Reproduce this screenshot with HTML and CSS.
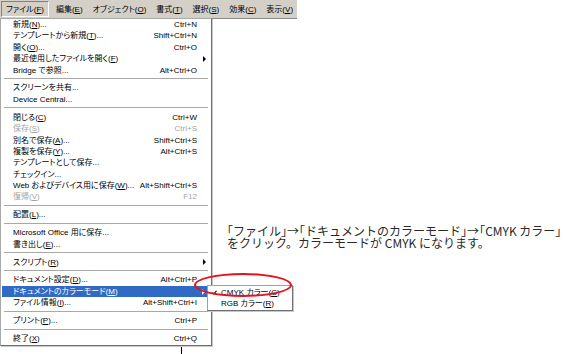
FILE: index.html
```html
<!DOCTYPE html>
<html lang="ja">
<head>
    <meta charset="UTF-8">
    <meta name="viewport" content="width=device-width, initial-scale=1.0">
    <title>ドキュメントのカラーモード</title>
    <link rel="stylesheet" href="styles.css">
</head>
<body>
    <div class="screen">
        <div class="menubar">
            <span class="bar-item active">ファイル(<u>F</u>)</span>
            <span class="bar-item">編集(<u>E</u>)</span>
            <span class="bar-item">オブジェクト(<u>O</u>)</span>
            <span class="bar-item">書式(<u>T</u>)</span>
            <span class="bar-item">選択(<u>S</u>)</span>
            <span class="bar-item">効果(<u>C</u>)</span>
            <span class="bar-item">表示(<u>V</u>)</span>
        </div>

        <div class="main">
            <div class="dropdown">
                <div class="row"><span>新規(<u>N</u>)...</span><span class="key">Ctrl+N</span><span></span></div>
                <div class="row"><span>テンプレートから新規(<u>T</u>)...</span><span class="key">Shift+Ctrl+N</span><span></span></div>
                <div class="row"><span>開く(<u>O</u>)...</span><span class="key">Ctrl+O</span><span></span></div>
                <div class="row"><span>最近使用したファイルを開く(<u>F</u>)</span><span class="key"></span><span class="arrow"></span></div>
                <div class="row"><span>Bridge で参照...</span><span class="key">Alt+Ctrl+O</span><span></span></div>
                <div class="sep"></div>
                <div class="row"><span>スクリーンを共有...</span><span class="key"></span><span></span></div>
                <div class="row"><span>Device Central...</span><span class="key"></span><span></span></div>
                <div class="sep"></div>
                <div class="row"><span>閉じる(<u>C</u>)</span><span class="key">Ctrl+W</span><span></span></div>
                <div class="row disabled"><span>保存(<u>S</u>)</span><span class="key">Ctrl+S</span><span></span></div>
                <div class="row"><span>別名で保存(<u>A</u>)...</span><span class="key">Shift+Ctrl+S</span><span></span></div>
                <div class="row"><span>複製を保存(<u>Y</u>)...</span><span class="key">Alt+Ctrl+S</span><span></span></div>
                <div class="row"><span>テンプレートとして保存...</span><span class="key"></span><span></span></div>
                <div class="row"><span>チェックイン...</span><span class="key"></span><span></span></div>
                <div class="row"><span>Web およびデバイス用に保存(<u>W</u>)...</span><span class="key">Alt+Shift+Ctrl+S</span><span></span></div>
                <div class="row disabled"><span>復帰(<u>V</u>)</span><span class="key">F12</span><span></span></div>
                <div class="sep"></div>
                <div class="row"><span>配置(<u>L</u>)...</span><span class="key"></span><span></span></div>
                <div class="sep"></div>
                <div class="row"><span>Microsoft Office 用に保存...</span><span class="key"></span><span></span></div>
                <div class="row"><span>書き出し(<u>E</u>)...</span><span class="key"></span><span></span></div>
                <div class="sep"></div>
                <div class="row"><span>スクリプト(<u>R</u>)</span><span class="key"></span><span class="arrow"></span></div>
                <div class="sep"></div>
                <div class="row"><span>ドキュメント設定(<u>D</u>)...</span><span class="key">Alt+Ctrl+P</span><span></span></div>
                <div class="row selected"><span>ドキュメントのカラーモード(<u>M</u>)</span><span class="key"></span><span class="arrow"></span></div>
                <div class="row"><span>ファイル情報(<u>I</u>)...</span><span class="key">Alt+Shift+Ctrl+I</span><span></span></div>
                <div class="sep"></div>
                <div class="row"><span>プリント(<u>P</u>)...</span><span class="key">Ctrl+P</span><span></span></div>
                <div class="sep"></div>
                <div class="row"><span>終了(<u>X</u>)</span><span class="key">Ctrl+Q</span><span></span></div>
            </div>

            <p class="note">
                <span class="hw">「</span>ファイル<span class="hw">」</span>→<span class="hw">「</span>ドキュメントのカラーモード<span class="hw">」</span>→<span class="hw">「</span>CMYK カラー<span class="hw">」</span><br>
                をクリック。カラーモードが CMYK になります。
            </p>
        </div>

        <!-- submenu, red mark and cursor sit over the menu -->
        <div class="submenu">
            <div class="sub-row">
                <svg class="check" width="5" height="5" viewBox="0 0 5 5"><polyline points="0.5,2.5 1.8,4 4.5,0.8" fill="none" stroke="#000" stroke-width="1.1"/></svg>
                <span>CMYK カラー(<u>C</u>)</span>
            </div>
            <div class="sub-row">
                <span></span>
                <span>RGB カラー(<u>R</u>)</span>
            </div>
        </div>
        <div class="ring"></div>
        <div class="cursor-line"></div>
    </div>
</body>
</html>
```

FILE: styles.css
```css
body {
    margin: 0;
    padding: 0;
    background: #fff;
    overflow: hidden;
}

.screen {
    position: relative;
    width: 563px;
    height: 354px;
    font-family: 'Liberation Sans', 'Noto Sans CJK JP', sans-serif;
    font-size: 8px;
    font-feature-settings: "palt";
    color: #000;
}

u {
    text-decoration: underline;
    text-underline-offset: 1px;
}

.menubar {
    display: flex;
    align-items: center;
    width: 297px;
    height: 18px;
    background: #d4d0c8;
    border-bottom: 1px solid #8c8c8c;
    overflow: hidden;
    white-space: nowrap;
}

.bar-item {
    padding: 2px 4px 1px;
    line-height: 11px;
    border: 1px solid transparent;
}

.bar-item.active {
    margin-left: 1px;
    margin-right: 2px;
    border-color: #808080 #fff #fff #808080;
}

.main {
    display: flex;
    align-items: flex-start;
}

.dropdown {
    flex-shrink: 0;
    width: 210px;
    margin-top: -1px;
    padding-bottom: 1px;
    background: #fff;
    border: 1px solid #a8a8a8;
    border-right-color: #707070;
    border-bottom-color: #707070;
    box-shadow: 1px 1px 0 #c8c8c8;
}

.row {
    display: grid;
    grid-template-columns: 1fr auto 14px;
    align-items: center;
    height: 11.4px;
    line-height: 11.4px;
    padding-left: 12px;
    white-space: nowrap;
}

.row .key {
    text-align: right;
}

.row.disabled {
    color: #a4a4a4;
}

.row.selected {
    background: #316ac5;
    color: #fff;
    margin: 0 1px;
    padding-left: 11px;
}

.arrow {
    width: 0;
    height: 0;
    margin-left: 6px;
    border-top: 3px solid transparent;
    border-bottom: 3px solid transparent;
    border-left: 3px solid #000;
}

.row.selected .arrow {
    border-left-color: #fff;
}

.sep {
    margin: 2.25px 3px;
    border-top: 1px solid #a8a8a8;
    border-bottom: 1px solid #fff;
}

.note {
    margin: 206px 0 0 15px;
    font-family: 'Noto Sans CJK JP', sans-serif;
    font-size: 12px;
    line-height: 11.7px;
    font-feature-settings: normal;
    color: #2a2a2a;
    white-space: nowrap;
}

.note .hw {
    font-feature-settings: "halt";
}

.submenu {
    position: absolute;
    left: 207px;
    top: 285px;
    width: 84px;
    padding: 0.5px 0;
    background: #fff;
    border: 1px solid #a0a0a0;
    border-right-color: #707070;
    border-bottom-color: #707070;
    box-shadow: 1px 1px 0 #c8c8c8;
}

.sub-row {
    display: grid;
    grid-template-columns: 13px auto;
    align-items: center;
    height: 11.4px;
    line-height: 11.4px;
    white-space: nowrap;
}

.check {
    margin-left: 4px;
}

.ring {
    position: absolute;
    left: 194px;
    top: 273px;
    width: 94px;
    height: 20px;
    border: 2px solid #e8101e;
    border-radius: 50%;
}

.cursor-line {
    position: absolute;
    left: 181px;
    top: 347px;
    width: 1px;
    height: 7px;
    background: #000;
}
```
